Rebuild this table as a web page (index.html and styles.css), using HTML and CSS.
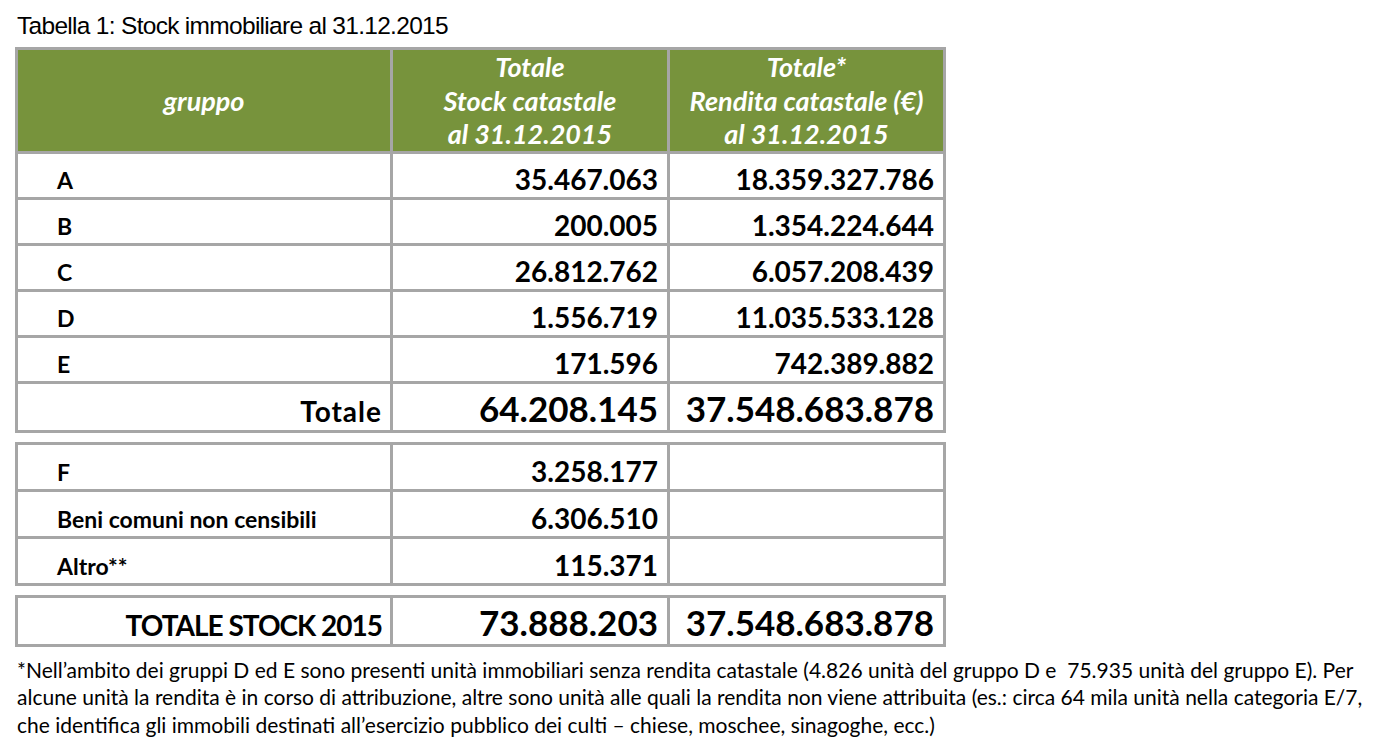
FILE: index.html
```html
<!DOCTYPE html>
<html lang="it">
<head>
<meta charset="utf-8">
<title>Tabella 1: Stock immobiliare al 31.12.2015</title>
<link rel="stylesheet" href="styles.css">
</head>
<body>
<div class="page">
  <h1 class="title">Tabella 1: Stock immobiliare al 31.12.2015</h1>
  <div class="blocks">
    <table class="grid">
      <colgroup><col class="c1"><col class="c2"><col class="c3"></colgroup>
      <thead>
        <tr>
          <th class="head">gruppo</th>
          <th class="head">Totale<br>Stock catastale<br>al 31.12.2015</th>
          <th class="head">Totale*<br>Rendita catastale (€)<br>al 31.12.2015</th>
        </tr>
      </thead>
      <tbody>
        <tr><td class="lab">A</td><td class="num">35.467.063</td><td class="num">18.359.327.786</td></tr>
        <tr><td class="lab">B</td><td class="num">200.005</td><td class="num">1.354.224.644</td></tr>
        <tr><td class="lab">C</td><td class="num">26.812.762</td><td class="num">6.057.208.439</td></tr>
        <tr><td class="lab">D</td><td class="num">1.556.719</td><td class="num">11.035.533.128</td></tr>
        <tr><td class="lab">E</td><td class="num">171.596</td><td class="num">742.389.882</td></tr>
        <tr><td class="totlab short">Totale</td><td class="big">64.208.145</td><td class="big">37.548.683.878</td></tr>
      </tbody>
    </table>
    <table class="grid second">
      <colgroup><col class="c1"><col class="c2"><col class="c3"></colgroup>
      <tbody>
        <tr><td class="lab">F</td><td class="num">3.258.177</td><td class="empty"></td></tr>
        <tr><td class="lab">Beni comuni non censibili</td><td class="num">6.306.510</td><td class="empty"></td></tr>
        <tr><td class="lab">Altro**</td><td class="num">115.371</td><td class="empty"></td></tr>
      </tbody>
    </table>
    <table class="grid">
      <colgroup><col class="c1"><col class="c2"><col class="c3"></colgroup>
      <tbody>
        <tr><td class="totlab long">TOTALE STOCK 2015</td><td class="big">73.888.203</td><td class="big">37.548.683.878</td></tr>
      </tbody>
    </table>
  </div>
  <p class="note">*Nell’ambito dei gruppi D ed E sono presenti unità immobiliari senza rendita catastale (4.826 unità del gruppo D e&nbsp; 75.935 unità del gruppo E). Per<br>alcune unità la rendita è in corso di attribuzione, altre sono unità alle quali la rendita non viene attribuita (es.: circa 64 mila unità nella categoria E/7,<br>che identifica gli immobili destinati all’esercizio pubblico dei culti – chiese, moschee, sinagoghe, ecc.)</p>
</div>
</body>
</html>
```

FILE: styles.css
```css
html, body {
  margin: 0;
  padding: 0;
  background: #ffffff;
}
.page {
  padding: 8px 0 0 15px;
  font-family: Lato, "Open Sans", "DejaVu Sans", sans-serif;
  color: #000;
}
.title {
  margin: 0 0 0 2px;
  font-family: "Liberation Sans Narrow", "Liberation Sans", Arial, sans-serif;
  font-weight: normal;
  font-size: 24.5px;
  line-height: 36px;
  height: 39px;
  letter-spacing: -0.7px;
}
.blocks {
  display: flex;
  flex-direction: column;
  gap: 9px;
}
.grid {
  border-collapse: collapse;
  table-layout: fixed;
  width: 928px;
}
.c1 { width: 375px; }
.c2 { width: 277px; }
.c3 { width: 276px; }
.grid th,
.grid td {
  border: 3px solid #a6a6a6;
  padding: 0;
  white-space: nowrap;
}
.grid th.head {
  background: #77933c;
  color: #fff;
  font-weight: 700;
  font-style: italic;
  font-size: 27px;
  line-height: 33.5px;
  height: 100px;
  text-align: center;
  vertical-align: middle;
}
.grid td {
  vertical-align: bottom;
  font-weight: 700;
}
.grid td.lab {
  padding: 0 0 5px 39px;
  height: 38px;
  font-size: 23px;
  line-height: 24px;
}
.grid td.num {
  padding: 0 9px 3px 0;
  height: 40px;
  text-align: right;
  font-size: 28px;
  line-height: 30px;
}
.grid td.empty {
  height: 43px;
}
.second td.lab { height: 39px; }
.second td.num { height: 41px; }
.second td.empty { height: 44px; }
.grid td.big {
  padding: 0 9px 3px 0;
  height: 43px;
  text-align: right;
  font-size: 35px;
  line-height: 38px;
}
.grid td.totlab {
  padding: 0 8px 4px 0;
  height: 42px;
  text-align: right;
  font-size: 28px;
  line-height: 30px;
}
.short { letter-spacing: 1px; }
.long { letter-spacing: -1px; }
.note {
  margin: 9px 0 0 2px;
  font-size: 21px;
  line-height: 27.5px;
  white-space: nowrap;
}
```
